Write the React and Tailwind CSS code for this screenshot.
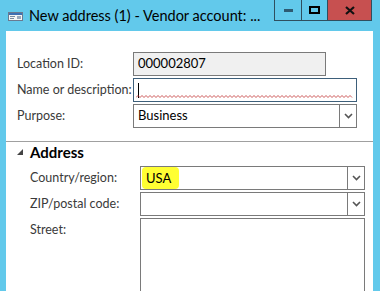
import React from "react";

const font = { fontFamily: '"Segoe UI", Lato, "Noto Sans", sans-serif' };

function Chevron() {
  return (
    <svg width="9" height="6" viewBox="0 0 9 6">
      <path d="M1 1 L4.5 4.5 L8 1" fill="none" stroke="#555" strokeWidth="1.6" />
    </svg>
  );
}

function Select({ width, children, pad = "pl-[4px]" }) {
  return (
    <div className={`flex h-[24px] ${width} border border-[#7a7a7a] bg-white`}>
      <div className={`flex flex-1 items-center ${pad} text-[13px] text-black`}>{children}</div>
      <div className="flex w-[17px] items-center justify-center border-l border-[#7a7a7a]">
        <Chevron />
      </div>
    </div>
  );
}

const label = "whitespace-nowrap text-[12.5px] text-[#3a3a3a]";

export default function App() {
  return (
    <div className="flex h-[291px] w-[380px] flex-col overflow-hidden bg-[#62c9eb]" style={font}>
      <div className="flex h-[31px] shrink-0">
        <div className="flex min-w-0 flex-1 items-center overflow-hidden pl-[8px] pt-[2px]">
          <svg className="shrink-0" width="15" height="9" viewBox="0 0 15 9">
            <rect x="0.5" y="0.5" width="14" height="8" fill="#f4f4f4" stroke="#6a7a90" />
            <rect x="1" y="1" width="13" height="2" fill="#3e6fb3" />
            <rect x="2" y="4" width="5" height="1" fill="#7a8aa0" />
            <rect x="2" y="6" width="4" height="1" fill="#7a8aa0" />
            <rect x="9" y="4" width="4" height="3" fill="#9aa8bb" />
          </svg>
          <span className="ml-[6px] whitespace-nowrap text-[14.5px] leading-none text-black">
            New address (1) - Vendor account: ...
          </span>
        </div>
        <div className="mr-[8px] flex h-[21px] shrink-0 border border-t-0 border-[#2f4f5f]">
          <div className="flex w-[27px] items-center justify-center border-r border-[#2f4f5f]">
            <div className="h-[3px] w-[9px] bg-[#2d5a72]" />
          </div>
          <div className="flex w-[26px] items-center justify-center border-r border-[#2f4f5f]">
            <div className="h-[8px] w-[11px] border-[2px] border-black" />
          </div>
          <div className="flex w-[43px] items-center justify-center bg-[#c75050]">
            <svg width="10" height="9" viewBox="0 0 10 9">
              <path d="M1 1 L9 8 M9 1 L1 8" stroke="#111" strokeWidth="2.2" />
            </svg>
          </div>
        </div>
      </div>
      <div className="ml-[6px] mr-[7px] flex flex-1 flex-col bg-white pt-[21px]">
        <div className="flex flex-col gap-[2px] pl-[11px]">
          <div className="flex items-center">
            <div className={`w-[116px] ${label}`}>Location ID:</div>
            <div className="flex h-[24px] w-[193px] items-center border border-[#7a7a7a] bg-[#f0f0f0] pl-[4px] text-[13px] text-black">
              000002807
            </div>
          </div>
          <div className="flex items-center">
            <div className={`w-[116px] ${label}`}>Name or description:</div>
            <div className="relative flex h-[24px] w-[224px] items-center border border-[#3d5f7a] bg-white pl-[4px]">
              <div className="h-[15px] w-[1px] bg-black" />
              <svg className="absolute bottom-[3px] left-[2px]" width="218" height="3" viewBox="0 0 218 3">
                <path
                  d={Array.from({ length: 109 }, (_, i) => `${i === 0 ? "M" : "L"}${i * 2} ${i % 2 === 0 ? 2.5 : 0.5}`).join(" ")}
                  fill="none"
                  stroke="#c03030"
                  strokeWidth="0.8"
                />
              </svg>
            </div>
          </div>
          <div className="flex items-center">
            <div className={`w-[116px] ${label}`}>Purpose:</div>
            <Select width="w-[224px]">Business</Select>
          </div>
        </div>
        <div className="mt-[13px] h-[1px] bg-[#a0a0a0]" />
        <div className="flex items-center pl-[11px]">
          <svg width="6" height="6" viewBox="0 0 6 6">
            <path d="M6 0 L6 6 L0 6 Z" fill="#444" />
          </svg>
          <span className="ml-[7px] text-[15px] font-bold leading-[20px] text-black">Address</span>
        </div>
        <div className="mt-[4px] flex flex-col gap-[2px] pl-[24px]">
          <div className="flex items-center">
            <div className={`w-[110px] ${label}`}>Country/region:</div>
            <Select width="w-[225px]" pad="pl-0">
              <span className="ml-[1px] rounded-[4px] bg-[#ffff33] pl-[4px] pr-[8px] leading-[22px]">USA</span>
            </Select>
          </div>
          <div className="flex items-center">
            <div className={`w-[110px] ${label}`}>ZIP/postal code:</div>
            <Select width="w-[225px]"></Select>
          </div>
          <div className="flex items-start">
            <div className={`w-[110px] pt-[3px] ${label}`}>Street:</div>
            <div className="h-[90px] w-[225px] border border-[#7a7a7a] bg-white" />
          </div>
        </div>
      </div>
    </div>
  );
}
